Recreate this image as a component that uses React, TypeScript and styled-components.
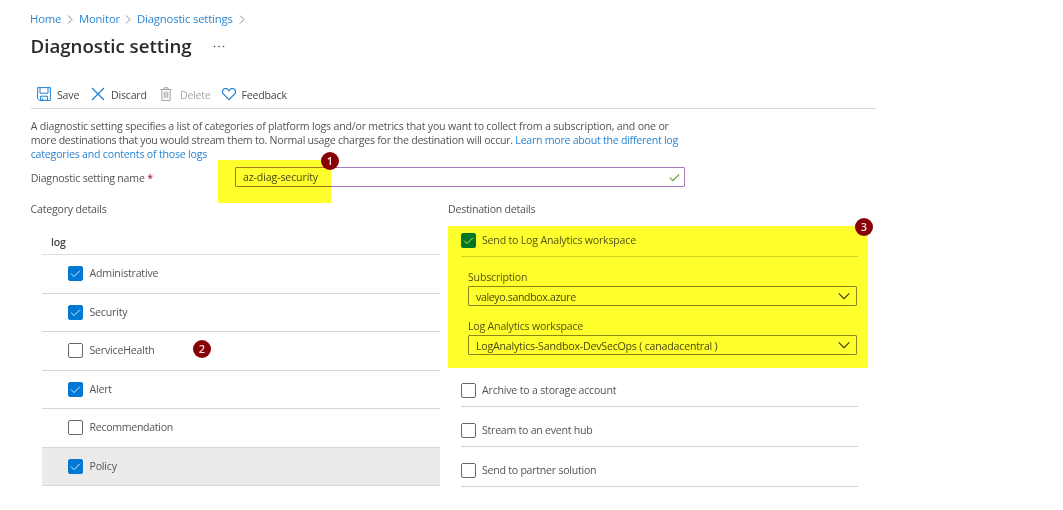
import React from "react";
import styled, { createGlobalStyle, css } from "styled-components";

const GlobalStyle = createGlobalStyle`
  * { box-sizing: border-box; }
  body { margin: 0; background: #fff; }
`;

const Page = styled.main`
  width: 1063px;
  height: 510px;
  overflow: hidden;
  padding: 12px 0 0 30px;
  color: #555453;
  font: 10.6px/14px "Open Sans", "Noto Sans", sans-serif;
`;

const Text = styled.span<{ $ls?: number }>`
  letter-spacing: ${(p) => p.$ls ?? -0.2}px;
  white-space: nowrap;
`;

const Breadcrumb = styled.nav`
  display: flex;
  align-items: center;
  height: 14px;
  font-size: 11.3px;
`;

const Crumb = styled.a<{ $w: number }>`
  width: ${(p) => p.$w}px;
  color: #2a84d2;
  letter-spacing: -0.17px;
  white-space: nowrap;
`;

const CrumbArrow = styled.svg`
  width: 6px;
  height: 9px;
  margin: 0 6px 0 7px;
  fill: none;
  stroke: #8a8886;
`;

const TitleRow = styled.div`
  display: flex;
  align-items: center;
  height: 26px;
  margin-top: 7px;
`;

const Title = styled.h1`
  width: 182.5px;
  margin: 0;
  padding-left: 0.5px;
  color: #2b2a29;
  font-size: 18.7px;
  font-weight: 600;
  line-height: 26px;
  letter-spacing: -0.01px;
  white-space: nowrap;
`;

const Dots = styled.svg`
  width: 12px;
  height: 3px;
  fill: #4a4948;
`;

const Toolbar = styled.div`
  display: flex;
  align-items: center;
  width: 845px;
  height: 29px;
  margin: 21px 0 0 1px;
  padding-left: 6px;
  border-bottom: 1px solid #d6d8da;
`;

const Command = styled.button<{ $w: number; $disabled?: boolean }>`
  display: flex;
  align-items: center;
  gap: 6px;
  width: ${(p) => p.$w}px;
  padding: 0;
  border: 0;
  background: none;
  color: ${(p) => (p.$disabled ? "#a9a8a7" : "#494847")};
  font: inherit;
  text-align: left;

  ${Text} { padding-top: 1px; }

  svg {
    flex: none;
    width: 14px;
    height: 14px;
    fill: none;
    stroke: ${(p) => (p.$disabled ? "#a3a2a1" : "#1c7ed3")};
  }
`;

const Intro = styled.p`
  margin: 10px 0 0;
  padding-left: 0.7px;
  a { color: #2a84d2; }
`;

const NameRow = styled.div`
  position: relative;
  display: flex;
  align-items: center;
  height: 20px;
  margin-top: 6px;
`;

const NameLabel = styled.label`
  width: 205px;
  padding: 1px 0 0 0.7px;
  b { color: #b3263a; font-weight: 600; }
`;

const NameField = styled.div`
  display: flex;
  align-items: center;
  justify-content: space-between;
  width: 450px;
  height: 20px;
  padding: 0 4px 0 7px;
  border: 1px solid #a978bd;
  border-radius: 1px;
  color: #494847;
`;

const Highlight = styled.div<{ $x: number; $y: number; $w: number; $h: number }>`
  position: absolute;
  left: ${(p) => p.$x}px;
  top: ${(p) => p.$y}px;
  width: ${(p) => p.$w}px;
  height: ${(p) => p.$h}px;
  background: #ffff2d;
  mix-blend-mode: multiply;
  pointer-events: none;
`;

const Marker = styled.div<{ $x: number; $y: number }>`
  position: absolute;
  left: ${(p) => p.$x}px;
  top: ${(p) => p.$y}px;
  display: grid;
  place-items: center;
  width: 18px;
  height: 18px;
  border-radius: 50%;
  background: #870006;
  color: #f6e6e6;
  font-size: 11px;
  font-weight: 600;
  line-height: 18px;
`;

const Columns = styled.div`
  display: flex;
  margin-top: 15px;
`;

const Categories = styled.section`
  width: 418px;
`;

const SectionTitle = styled.div`
  padding-left: 0.5px;
`;

const Destinations = styled.section`
  position: relative;
  width: 430px;
`;

const Table = styled.div`
  position: relative;
  width: 398px;
  margin: 14px 0 0 12px;
`;

const TableHead = styled.div`
  height: 25px;
  padding: 5px 0 0 9px;
  border-bottom: 1px solid #dcdcdc;
  color: #4a4948;
  font-weight: 600;
`;

const CategoryRow = styled.div<{ $selected?: boolean }>`
  display: flex;
  align-items: center;
  gap: 6.5px;
  height: 38.5px;
  padding-left: 26px;
  border-bottom: 1px solid #d6d6d6;
  ${(p) => p.$selected && css`background: #edebe9;`}

  ${Text} { padding-bottom: 1px; }
`;

const Box = styled.span<{ $on?: boolean }>`
  display: grid;
  flex: none;
  place-items: center;
  width: 15px;
  height: 15px;
  border: 1px solid ${(p) => (p.$on ? "#0078d4" : "#6a6968")};
  border-radius: 2px;
  background: ${(p) => (p.$on ? "#0078d4" : "#fff")};
`;

const Option = styled.div<{ $h: number; $pt?: number; $pb?: number }>`
  display: flex;
  align-items: center;
  gap: 6px;
  width: 397px;
  height: ${(p) => p.$h}px;
  margin-left: 13px;
  padding-top: ${(p) => p.$pt ?? 8}px;
  padding-bottom: ${(p) => p.$pb ?? 0}px;
  border-bottom: 1px solid #d2d2d2;

  ${Text} { padding-bottom: 1px; }
`;

const Field = styled.div<{ $top: number }>`
  width: 389px;
  margin: ${(p) => p.$top}px 0 0 20px;
`;

const Select = styled.div`
  display: flex;
  align-items: center;
  justify-content: space-between;
  height: 20px;
  margin-top: 2px;
  padding: 0 6px 0 7px;
  border: 1px solid #8a8886;
  border-radius: 1px;
  color: #494847;

  ${Text} { padding-top: 1px; }
`;

const WorkspaceBlock = styled.div`
  height: 143px;
  margin-top: 10px;
`;

const Check = ({ on }: { on?: boolean }) => (
  <Box $on={on}>
    {on && (
      <svg width="11" height="9" viewBox="0 0 11 9" fill="none" stroke="#d8ebfa" strokeWidth="1">
        <path d="M1 4.6 4 7.6 10 1.6" />
      </svg>
    )}
  </Box>
);

const Arrow = () => (
  <CrumbArrow viewBox="0 0 6 9">
    <path d="M1 .5 5 4.5 1 8.5" />
  </CrumbArrow>
);

const Chevron = () => (
  <svg width="12" height="8" viewBox="0 0 12 8" fill="none" stroke="#3a3938" strokeWidth="1.1">
    <path d="M.7 1.3 6 6.6 11.3 1.3" />
  </svg>
);

const categories = [
  { name: "Administrative", on: true },
  { name: "Security", on: true },
  { name: "ServiceHealth", on: false },
  { name: "Alert", on: true },
  { name: "Recommendation", on: false, ls: -0.3 },
  { name: "Policy", on: true, selected: true },
];

export default function App() {
  return (
    <Page>
      <GlobalStyle />
      <Breadcrumb>
        <Crumb $w={30}>Home</Crumb>
        <Arrow />
        <Crumb $w={39}>Monitor</Crumb>
        <Arrow />
        <Crumb $w={95}>Diagnostic settings</Crumb>
        <Arrow />
      </Breadcrumb>
      <TitleRow>
        <Title>Diagnostic setting</Title>
        <Dots viewBox="0 0 12 3">
          <circle cx="1.5" cy="1.5" r=".8" />
          <circle cx="6" cy="1.5" r=".8" />
          <circle cx="10.5" cy="1.5" r=".8" />
        </Dots>
      </TitleRow>
      <Toolbar>
        <Command $w={54}>
          <svg viewBox="0 0 14 14">
            <path d="M.6.6h12.8v12.8H2.4L.6 11.6zM3 .6v5.6h8V.6M3.6 13.4V9.2h6.8v4.2M5.6 13.2v-2" />
          </svg>
          <Text>Save</Text>
        </Command>
        <Command $w={69}>
          <svg viewBox="0 0 14 14"><path d="M1 1 13 13M13 1 1 13" strokeWidth="1.2" /></svg>
          <Text>Discard</Text>
        </Command>
        <Command $w={61.5} $disabled>
          <svg viewBox="0 0 14 14">
            <path d="M.5 2.5h11M4 2.5V.8h4v1.7M1.800 2.500v10.900h8.400V2.500M4.200 4.700v6.400M6 4.700v6.400M7.800 4.700v6.400" />
          </svg>
          <Text $ls={-0.25}>Delete</Text>
        </Command>
        <Command $w={80}>
          <svg viewBox="0 0 14 14">
            <path d="M7 12.6 1.5 7.1C-.3 5.2.3 2.4 2.5 1.7 4.3 1.1 6 2 7 3.7 8 2 9.7 1.1 11.5 1.7 13.7 2.4 14.3 5.2 12.5 7.1Z" strokeWidth="1.2" />
          </svg>
          <Text>Feedback</Text>
        </Command>
      </Toolbar>
      <Intro>
        <Text>A diagnostic setting specifies a list of categories of platform logs and/or metrics that you want to collect from a subscription, and one or</Text>
        <br />
        <Text $ls={-0.253}>more destinations that you would stream them to. Normal usage charges for the destination will occur. <a>Learn more about the different log</a></Text>
        <br />
        <Text><a>categories and contents of those logs</a></Text>
      </Intro>
      <NameRow>
        <NameLabel><Text>Diagnostic setting name <b>*</b></Text></NameLabel>
        <NameField>
          <Text $ls={-0.13}>az-diag-security</Text>
          <svg width="11" height="9" viewBox="0 0 11 9" fill="none" stroke="#62a52e" strokeWidth="1.2">
            <path d="M.8 4.7 3.8 7.7 10.2 1.3" />
          </svg>
        </NameField>
        <Highlight $x={188.4} $y={-7} $w={112.4} $h={43} />
        <Marker $x={291} $y={-15}>1</Marker>
      </NameRow>
      <Columns>
        <Categories>
          <SectionTitle><Text>Category details</Text></SectionTitle>
          <Table>
            <TableHead><Text>log</Text></TableHead>
            {categories.map((c) => (
              <CategoryRow key={c.name} $selected={c.selected}>
                <Check on={c.on} />
                <Text $ls={c.ls}>{c.name}</Text>
              </CategoryRow>
            ))}
            <Marker $x={151} $y={110}>2</Marker>
          </Table>
        </Categories>
        <Destinations>
          <Text $ls={-0.25}>Destination details</Text>
          <WorkspaceBlock>
            <Option $h={31} $pt={0} $pb={1}>
              <Check on />
              <Text>Send to Log Analytics workspace</Text>
            </Option>
            <Field $top={13}>
              <Text>Subscription</Text>
              <Select><Text $ls={-0.36}>valeyo.sandbox.azure</Text><Chevron /></Select>
            </Field>
            <Field $top={13}>
              <Text>Log Analytics workspace</Text>
              <Select><Text>LogAnalytics-Sandbox-DevSecOps ( canadacentral )</Text><Chevron /></Select>
            </Field>
          </WorkspaceBlock>
          <Option $h={38} $pt={6}><Check /><Text>Archive to a storage account</Text></Option>
          <Option $h={40}><Check /><Text $ls={-0.25}>Stream to an event hub</Text></Option>
          <Option $h={40}><Check /><Text $ls={-0.25}>Send to partner solution</Text></Option>
          <Highlight $x={0} $y={24} $w={420} $h={142.4} />
          <Marker $x={407} $y={16}>3</Marker>
        </Destinations>
      </Columns>
    </Page>
  );
}
